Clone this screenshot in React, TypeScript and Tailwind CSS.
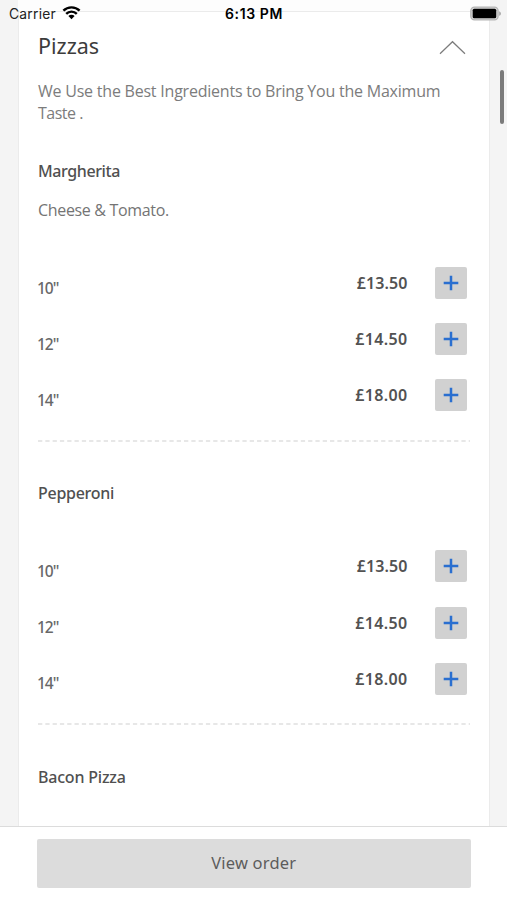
const open = "font-['Open_Sans','Noto_Sans',sans-serif]";
const noto = "font-['Noto_Sans',sans-serif]";

type Size = { label: string; price: string; tracking: string };

const sizes: Size[] = [
  { label: '10"', price: '£13.50', tracking: 'tracking-[0.1px]' },
  { label: '12"', price: '£14.50', tracking: 'tracking-[0.35px]' },
  { label: '14"', price: '£18.00', tracking: 'tracking-[0.35px]' },
];

function SizeRow({ size }: { size: Size }) {
  return (
    <div className="flex h-8 items-center">
      <span className={`${noto} mt-[9px] -ml-px flex-1 text-[15.5px] leading-6 font-medium tracking-[-1px] text-[#686868]`}>
        {size.label}
      </span>
      <span className={`${noto} mr-[28px] text-[16px] leading-6 font-semibold text-[#525252] ${size.tracking}`}>
        {size.price}
      </span>
      <button className="flex h-8 w-8 items-center justify-center rounded-[2px] bg-[#d1d1d1]" aria-label="Add">
        <svg width="16" height="16" viewBox="0 0 16 16" stroke="#2a6fd0" strokeWidth="2.5">
          <path d="M8 .7v14.6M.7 8h14.6" />
        </svg>
      </button>
    </div>
  );
}

function SizeList() {
  return (
    <div className="flex flex-col gap-[24.2px] pr-[2.6px]">
      {sizes.map((s) => (
        <SizeRow key={s.label} size={s} />
      ))}
    </div>
  );
}

function Divider() {
  return (
    <svg className="block h-[2px] w-full" viewBox="0 0 432 2" preserveAspectRatio="none">
      <path d="M0 1H432" stroke="#e0e0e0" strokeWidth="1.3" strokeDasharray="4.3 3" />
    </svg>
  );
}

export default function App() {
  return (
    <div className="relative flex h-[900px] w-[507px] flex-col overflow-hidden bg-[#f4f4f4]">
      <header className="absolute inset-x-0 top-0 z-10 flex h-7 items-center text-black">
        <div className="flex flex-1 items-center pl-[9px]">
          <span className="font-['Inter',sans-serif] text-[13.8px] leading-5 tracking-[0.25px] text-[#222]">Carrier</span>
          <svg className="ml-[6px] -mt-[2px]" width="19" height="14" viewBox="0 0 18 14" fill="none" stroke="#000" strokeWidth="2.4">
            <path d="M.9 4.7a11.5 11.5 0 0 1 16.2 0M3.7 7.9a7.4 7.4 0 0 1 10.6 0" />
            <path d="M5.9 10.1a4.4 4.4 0 0 1 6.2 0L9 13.3z" fill="#000" stroke="none" />
          </svg>
        </div>
        <span className="mr-[3px] font-['Inter',sans-serif] text-[14px] leading-5 font-semibold tracking-[0.6px]">6:13 PM</span>
        <div className="flex flex-1 justify-end pr-[5px]">
          <svg className="-mt-[2px]" width="32" height="15" viewBox="0 0 31 14">
            <rect x=".8" y=".8" width="26.4" height="12.4" rx="3.5" fill="#d8d8d8" stroke="#b5b5b5" strokeWidth="1.3" />
            <rect x="2.6" y="2.4" width="22.8" height="9.2" rx="1.5" fill="#000" />
            <path d="M28.2 4.7c2.4.8 2.4 3.8 0 4.6z" fill="#aaa" />
          </svg>
        </div>
      </header>

      <main className="h-[826px] overflow-hidden pr-[17px] pl-[18px]">
        <div className="h-[11px] bg-[#fdfdfd]" />
        <section className="h-[816px] border border-[#ebebeb] bg-white px-[19px]">
          <div className="flex h-[68px] items-center justify-between">
            <h1 className={`${noto} text-[21.5px] leading-8 text-[#3c3c3c]`}>Pizzas</h1>
            <svg className="mr-[4px] mt-[3px]" width="27" height="15" viewBox="0 0 27 15" fill="none" stroke="#7c7c7c" strokeWidth="1.2">
              <path d="M1 13.8 13.5 1.7 26 13.8" />
            </svg>
          </div>
          <p className={`${open} text-[16px] leading-[22px] tracking-[-0.22px] text-[#7c7c7c]`}>
            We Use the Best Ingredients to Bring You the Maximum
            <br />
            <span className="tracking-[-0.5px]">Taste .</span>
          </p>
          <h2 className={`${noto} mt-[35px] text-[16px] leading-6 font-medium tracking-[-0.4px] text-[#505050]`}>Margherita</h2>
          <p className={`${open} mt-[15px] mb-[45px] text-[16px] leading-6 tracking-[-0.33px] text-[#747474]`}>Cheese &amp; Tomato.</p>
          <SizeList />
          <div className="mt-[28.6px]"><Divider /></div>
          <h2 className={`${noto} mt-[39px] mb-[45.4px] text-[16px] leading-6 font-medium tracking-[-0.28px] text-[#505050]`}>Pepperoni</h2>
          <SizeList />
          <div className="mt-[28.2px]"><Divider /></div>
          <h2 className={`${noto} mt-[39.8px] text-[16px] leading-6 font-medium tracking-[-0.2px] text-[#505050]`}>Bacon Pizza</h2>
        </section>
      </main>

      <footer className="h-[74px] border-t border-[#dcdcdc] bg-white pr-[36.5px] pl-[37px] pt-[12px]">
        <button className={`${noto} h-[49px] w-full rounded-[2px] bg-[#dcdcdc] text-[16.5px] tracking-[0.2px] text-[#5c5c5c]`}>
          View order
        </button>
      </footer>

      <div className="absolute top-[70px] right-[3px] h-[54px] w-[4px] rounded-full bg-[#7b7b7b]" />
    </div>
  );
}
